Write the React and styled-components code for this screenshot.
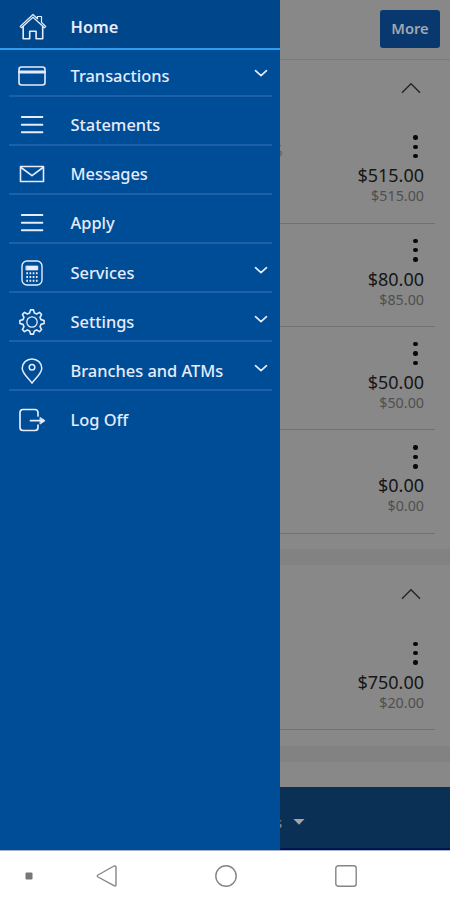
import React from 'react';
import styled, { createGlobalStyle } from 'styled-components';

const Global = createGlobalStyle`
  * { box-sizing: border-box; }
  body { margin: 0; background: #fff; font-family: "Noto Sans", "Open Sans", sans-serif; }
`;

const Screen = styled.div`
  width: 450px;
  height: 900px;
  display: flex;
  flex-direction: column;
  overflow: hidden;
`;

const AppArea = styled.div`
  position: relative;
  height: 850px;
  display: flex;
  flex-direction: column;
  background: #888;
`;

const Drawer = styled.nav`
  position: absolute;
  top: 0;
  left: 0;
  width: 280px;
  height: 850px;
  background: #004d97;
  color: #e6ecfb;
`;

const MenuRow = styled.a`
  display: grid;
  grid-template-columns: 45px 1fr 22px;
  column-gap: 16.5px;
  align-items: center;
  height: ${(p) => (p.$first ? 46.6 : 49.15)}px;
  padding-top: ${(p) => (p.$first ? 7.6 : 10)}px;
  margin: 0 8px 0 9px;
  border-bottom: 2px solid ${(p) => (p.$last ? 'transparent' : '#1e5fa5')};
  font-size: 16.4px;
  font-weight: 500;
`;

const HomeRow = styled(MenuRow)`
  height: 50px;
  margin: 0;
  padding: 5.5px 9px 0;
  background: #00468a;
  border-bottom: 2px solid #2e9fee;
  font-weight: 600;
`;

const IconBox = styled.span`
  display: flex;
  justify-content: center;
  padding-left: ${(p) => (p.$shift ? 3 : 0)}px;
  svg { display: block; overflow: visible; }
`;

const Label = styled.span`
  line-height: 22px;
  white-space: nowrap;
`;

const Toggle = styled.span`
  display: flex;
  justify-content: center;
  padding-bottom: 5px;
`;

const Header = styled.header`
  height: 59.5px;
  padding: 10px 10px 0;
  display: flex;
  justify-content: flex-end;
  border-bottom: 1.5px solid #7b7b7d;
`;

const MoreButton = styled.button`
  width: 60px;
  height: 38px;
  padding: 0 0 2px;
  border: 0;
  border-radius: 3px;
  background: #08386e;
  color: #a2a7ae;
  font: 600 14.7px "Noto Sans", sans-serif;
`;

const SectionHead = styled.div`
  height: ${(p) => p.$height}px;
  padding: 0 29.5px 4px 0;
  display: flex;
  justify-content: flex-end;
  align-items: center;
`;

const Account = styled.div`
  height: 103.4px;
  margin: 0 15px;
  padding: 14px 11px 0 0;
  display: grid;
  grid-template-columns: 268px 1fr;
  border-bottom: 1.5px solid #717171;
`;

const Mask = styled.span`
  padding-top: 2px;
  text-align: right;
  font-size: 17px;
  line-height: 30px;
  color: #656565;
`;

const Figures = styled.div`
  display: flex;
  flex-direction: column;
  align-items: flex-end;
`;

const Dots = styled.span`
  display: flex;
  flex-direction: column;
  gap: 5px;
  padding: 1px 6.5px 0 0;
  height: 27px;
  i { width: 4.4px; height: 4.4px; border-radius: 50%; background: #090909; }
`;

const Amount = styled.span`
  margin-top: 3px;
  font-size: 18px;
  line-height: 23px;
  color: #161616;
`;

const Available = styled.span`
  font-size: 14.3px;
  line-height: 17px;
  color: #4f4f4f;
`;

const Band = styled.div`
  height: 16px;
  margin-top: ${(p) => p.$gap}px;
  background: #828282;
`;

const BottomBar = styled.footer`
  height: 63.5px;
  margin-top: auto;
  padding: 9px 0 0 275px;
  display: flex;
  align-items: center;
  gap: 11px;
  background: #0a3055;
  border-bottom: 2px solid #00174f;
  color: #8290a4;
  font-size: 15px;
`;

const SystemNav = styled.div`
  height: 50px;
  display: grid;
  grid-template-columns: 57px 99px 140px 99px;
  align-items: center;
  justify-items: center;
  border-top: 1px solid #a8b2ce;
  background: #fff;
  svg { display: block; }
`;

const Line = ({ w = 28, h = 28, sw = 1.6, children }) => (
  <svg width={w} height={h} viewBox={`0 0 ${w} ${h}`} fill="none" stroke="currentColor" strokeWidth={sw} strokeLinecap="round" strokeLinejoin="round">{children}</svg>
);

const HomeIcon = () => (
  <Line>
    <path d="M1.2 13.5 14 1.5l4.5 4.3V3.5h4v6l4.2 4-1.3 1.2L14 4.2 2.5 14.7z" strokeWidth="1.2" />
    <path d="M4.2 13.5v12.3h6.5v-7.5h6.4v7.5h6.6V13.5" />
  </Line>
);
const CardIcon = () => (
  <Line h={20}>
    <rect x="1" y="1" width="26" height="18" rx="2.5" />
    <path d="M1.5 6h25" strokeWidth="3" />
  </Line>
);
const LinesIcon = () => (
  <Line h={20} sw={1.9}><path d="M3.8 2h20.6M3.8 9.8h20.6M3.8 17.3h20.6" /></Line>
);
const MailIcon = () => (
  <Line h={18}>
    <path d="M2.5 1.5h23v15h-23z" />
    <path d="m3 2.5 11 8.2L25 2.5" />
  </Line>
);
const CalcIcon = () => (
  <Line h={26} sw={1.4}>
    <rect x="4" y="1" width="20" height="24" rx="5" />
    <rect x="8.2" y="6" width="11.6" height="4" fill="currentColor" strokeWidth=".7" />
    <path d="M8.3 13.2h11.6M8.3 17h11.6M8.3 20.8h11.6" strokeDasharray="1.7 1.5" strokeLinecap="butt" strokeWidth="2" />
  </Line>
);

const gearPath = (() => {
  const pts = [];
  for (let i = 0; i < 8; i += 1) {
    [[-0.26, 9.3], [-0.12, 12.2], [0.12, 12.2], [0.26, 9.3]].forEach(([da, r]) => {
      const a = (i * Math.PI) / 4 + da;
      pts.push(`${(14 + r * Math.sin(a)).toFixed(2)} ${(13 - r * Math.cos(a)).toFixed(2)}`);
    });
  }
  return `M${pts.join('L')}Z`;
})();
const GearIcon = () => (
  <Line h={26} sw={1.6}><path d={gearPath} /><circle cx="14" cy="13" r="5.2" strokeWidth="1.3" /></Line>
);
const PinIcon = () => (
  <Line h={26} sw={1.5}>
    <path d="M14 25.2C11.2 20.5 4.2 15.8 4.2 10.2a9.8 9.3 0 0 1 19.6 0C23.8 15.8 16.8 20.5 14 25.2z" />
    <circle cx="14" cy="9.3" r="2.8" />
  </Line>
);
const LogOffIcon = () => (
  <Line h={24} sw={1.7}>
    <path d="M20 8V4.5a3 3 0 0 0-3-3H5a3 3 0 0 0-3 3v15a3 3 0 0 0 3 3h12a3 3 0 0 0 3-3V17" />
    <path d="M12.5 12.7H25" />
    <path d="m22.3 9.5 4.8 3.2-4.8 3.2z" fill="currentColor" strokeWidth=".8" />
  </Line>
);
const Down = () => <Line w={14} h={9} sw={1.7}><path d="m1.5 1.7 5.5 5 5.5-5" /></Line>;
const Up = () => (
  <svg width="20" height="12" viewBox="0 0 20 12" fill="none" stroke="#242424" strokeWidth="1.4"><path d="m1 10.8 9-9 9 9" /></svg>
);

const items = [
  ['Transactions', CardIcon, true],
  ['Statements', LinesIcon],
  ['Messages', MailIcon],
  ['Apply', LinesIcon],
  ['Services', CalcIcon, true],
  ['Settings', GearIcon, true],
  ['Branches and ATMs', PinIcon, true],
  ['Log Off', LogOffIcon],
];

const AccountRow = ({ amount, available, mask }) => (
  <Account>
    <Mask>{mask}</Mask>
    <Figures>
      <Dots><i /><i /><i /></Dots>
      <Amount>{amount}</Amount>
      <Available>{available}</Available>
    </Figures>
  </Account>
);

export default function App() {
  return (
    <Screen>
      <Global />
      <AppArea>
        <Header><MoreButton>More</MoreButton></Header>
        <SectionHead $height={60.7}><Up /></SectionHead>
        <AccountRow amount="$515.00" available="$515.00" mask="5" />
        <AccountRow amount="$80.00" available="$85.00" />
        <AccountRow amount="$50.00" available="$50.00" />
        <AccountRow amount="$0.00" available="$0.00" />
        <Band $gap={15.4} />
        <SectionHead $height={61.5}><Up /></SectionHead>
        <AccountRow amount="$750.00" available="$20.00" />
        <Band $gap={16} />
        <BottomBar>
          <span>s</span>
          <svg width="12" height="6" viewBox="0 0 12 6"><path d="M0.5 0h11L6 5.8z" fill="#a7a5a5" /></svg>
        </BottomBar>
        <Drawer>
          <HomeRow>
            <IconBox $shift><HomeIcon /></IconBox>
            <Label>Home</Label>
          </HomeRow>
          {items.map(([label, Icon, expandable], i) => (
            <MenuRow key={label} $first={i === 0} $last={i === items.length - 1}>
              <IconBox><Icon /></IconBox>
              <Label>{label}</Label>
              {expandable && <Toggle><Down /></Toggle>}
            </MenuRow>
          ))}
        </Drawer>
      </AppArea>
      <SystemNav>
        <svg width="8" height="8"><rect x=".5" y=".5" width="7" height="7" rx="1" fill="#777" /></svg>
        <svg width="22" height="22" viewBox="0 0 22 22" fill="none" stroke="#858585" strokeWidth="1.4" strokeLinejoin="round"><path d="M2 10 18 1Q20 .5 20 2.5v17q0 2-2 1.2L2 12q-1.5-1 0-2z" /></svg>
        <svg width="22" height="22" viewBox="0 0 22 22" fill="none" stroke="#858585" strokeWidth="1.4"><circle cx="11" cy="11" r="10.2" /></svg>
        <svg width="22" height="22" viewBox="0 0 22 22" fill="none" stroke="#858585" strokeWidth="1.4"><rect x=".8" y=".8" width="20.4" height="20.4" rx="2.5" /></svg>
      </SystemNav>
    </Screen>
  );
}
